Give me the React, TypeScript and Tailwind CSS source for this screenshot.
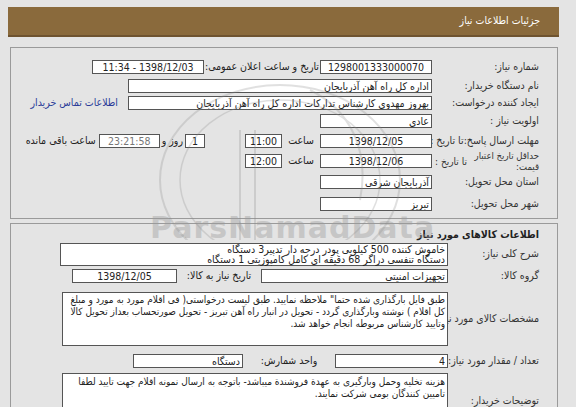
import React from 'react';

const Box = ({ w, children, align = 'center', className = '' }: { w: string; children?: React.ReactNode; align?: 'center' | 'right'; className?: string }) => (
  <div
    className={`${w} h-[14px] shrink-0 border border-[#555] bg-white px-[2px] leading-[12px] whitespace-nowrap overflow-hidden ${
      align === 'center' ? 'text-center' : 'text-right'
    } ${className}`}
  >
    {children}
  </div>
);

const Row = ({ label, children, className = 'h-[20px]', labelW = 'w-[107px]' }: { label: React.ReactNode; children?: React.ReactNode; className?: string; labelW?: string }) => (
  <div className={`flex items-center ${className}`}>
    <div className={`${labelW} shrink-0 text-[#333] whitespace-nowrap`}>{label}</div>
    <div className="flex items-center flex-1">{children}</div>
  </div>
);

export default function App() {
  return (
    <div
      dir="rtl"
      className="relative w-[576px] h-[407px] overflow-hidden bg-[#e4e4e4] text-[10.5px] text-[#222] font-['DejaVu_Sans_Condensed','DejaVu_Sans',sans-serif]"
    >
      {/* Header */}
      <div className="mt-[7px] mr-[17px] ml-[8px] h-[30px] bg-[#8a6a3c] border-b-2 border-[#6e5330] flex items-center pr-[19px] text-white">
        جزئیات اطلاعات نیاز
      </div>

      {/* Panel 1 */}
      <div className="mt-[10px] mr-[18px] ml-[10px] border border-[#9a9a9a] pt-[9px] pb-[3px] pr-[18px]">
        <Row label="شماره نیاز:">
          <Box w="w-[112px]">1298001333000070</Box>
          <span className="w-[116px] text-center whitespace-nowrap">تاریخ و ساعت اعلان عمومی:</span>
          <Box w="w-[112px]">1398/12/03 - 11:34</Box>
        </Row>
        <Row label="نام دستگاه خریدار:" className="h-[18px]">
          <Box w="w-[304px]" align="right">اداره کل راه آهن آذربایجان</Box>
        </Row>
        <Row label="ایجاد کننده درخواست:" className="h-[16px]">
          <Box w="w-[304px]" align="right">بهروز مهدوی کارشناس تدارکات اداره کل راه آهن آذربایجان</Box>
          <a className="mr-[10px] text-[#2b3d99] whitespace-nowrap">اطلاعات تماس خریدار</a>
        </Row>
        <Row label="اولویت نیاز :">
          <Box w="w-[112px]" align="right">عادی</Box>
        </Row>
        <Row
          label={
            <div className="flex justify-between pl-[3px]">
              <span>مهلت ارسال پاسخ:</span>
              <span>تا تاریخ :</span>
            </div>
          }
        >
          <Box w="w-[112px]">1398/12/05</Box>
          <span className="w-[38px] text-center">ساعت</span>
          <Box w="w-[37px]">11:00</Box>
          <div className="w-[40px]" />
          <Box w="w-[20px]">1</Box>
          <span className="px-[2px] whitespace-nowrap">روز و</span>
          <Box w="w-[61px]" className="bg-[#f2f2cc] text-[#777]">23:21:58</Box>
          <span className="pr-[3px] whitespace-nowrap">ساعت باقی مانده</span>
        </Row>
        <Row
          className="h-[20px]"
          label={
            <div className="flex justify-between items-center pl-[3px]">
              <span className="leading-[11px] text-right text-[9.5px]">
                حداقل تاریخ اعتبار
                <br />
                قیمت:
              </span>
              <span className="text-[10px]">تا تاریخ :</span>
            </div>
          }
        >
          <Box w="w-[112px]">1398/12/06</Box>
          <span className="w-[38px] text-center">ساعت</span>
          <Box w="w-[37px]">12:00</Box>
        </Row>
        <Row label="استان محل تحویل:" className="h-[22px]">
          <Box w="w-[112px]" align="right">آذربایجان شرقی</Box>
        </Row>
        <Row label="شهر محل تحویل:" className="h-[22px]">
          <Box w="w-[112px]" align="right">تبریز</Box>
        </Row>
      </div>

      {/* Panel 2 */}
      <div className="mt-[4px] mr-[18px] ml-[10px] border border-[#9a9a9a] pt-[3px] pr-[18px] h-[200px]">
        <div className="font-bold text-[#222] h-[14px] leading-[14px]">اطلاعات کالاهای مورد نیاز</div>
        <Row label="شرح کلی نیاز:" labelW="w-[91px]" className="h-[26px]">
          <div className="w-[388px] h-[23px] border border-[#555] bg-white px-[2px] leading-[10px] text-right">
            خاموش کننده 500 کیلویی پودر درجه دار تدپیر3 دستگاه
            <br />
            دستگاه تنفسی دراگر 68 دقیقه ای کامل کامپوزیتی 1 دستگاه
          </div>
        </Row>
        <Row label="گروه کالا:" labelW="w-[91px]" className="h-[18px]">
          <Box w="w-[187px]" align="right">تجهیزات امنیتی</Box>
          <span className="w-[84px] text-center whitespace-nowrap">تاریخ نیاز به کالا:</span>
          <Box w="w-[105px]">1398/12/05</Box>
        </Row>
        <Row label="مشخصات کالای مورد نیاز:" labelW="w-[91px]" className="h-[68px]">
          <div className="w-[386px] h-[54px] border border-[#555] bg-white px-[2px] pt-[1px] leading-[12px] text-right text-[10px]">
            طبق فایل بارگذاری شده حتما" ملاحظه نمایید. طبق لیست درخواستی( فی اقلام مورد به مورد و مبلغ کل اقلام ) نوشته وبارگذاری گردد - تحویل در انبار راه آهن تبریز - تحویل صورتحساب بعداز تحویل کالا وتایید کارشناس مربوطه انجام خواهد شد.
          </div>
        </Row>
        <Row label="تعداد / مقدار مورد نیاز:" labelW="w-[91px]" className="h-[16px]">
          <Box w="w-[113px]" align="right">4</Box>
          <span className="w-[92px] text-center whitespace-nowrap">واحد شمارش:</span>
          <Box w="w-[110px]" align="right">دستگاه</Box>
        </Row>
        <div className="flex items-start h-[40px] pt-[4px]">
          <div className="w-[91px] shrink-0 pt-[20px] text-[#333] whitespace-nowrap">توضیحات خریدار:</div>
          <div className="w-[386px] h-[40px] border border-[#555] bg-white px-[2px] pt-[2px] leading-[12px] text-right text-[10px]">
            هزینه تخلیه وحمل وبارگیری به عهدة فروشندة میباشد- باتوجه به ارسال نمونه اقلام جهت تایید لطفا تامیین کنندگان بومی شرکت نمایند.
          </div>
        </div>
      </div>

      {/* Watermark */}
      <div
        dir="ltr"
        className="pointer-events-none absolute left-[150px] top-[213px] text-[30px] leading-[30px] font-bold text-[#9a9a9a] opacity-40 font-['DejaVu_Sans',sans-serif] tracking-[1px]"
      >
        ParsNamadData
      </div>
      <svg className="pointer-events-none absolute left-[130px] top-[70px] opacity-25" width="300" height="170" viewBox="0 0 300 170">
        <ellipse cx="150" cy="110" rx="120" ry="95" fill="none" stroke="#888" strokeWidth="2" />
        <ellipse cx="150" cy="110" rx="100" ry="80" fill="none" stroke="#888" strokeWidth="1.5" />
        <path d="M110 60 L110 170 M125 60 L125 170 M180 20 C220 40 240 80 230 130" fill="none" stroke="#888" strokeWidth="2" />
      </svg>
    </div>
  );
}
